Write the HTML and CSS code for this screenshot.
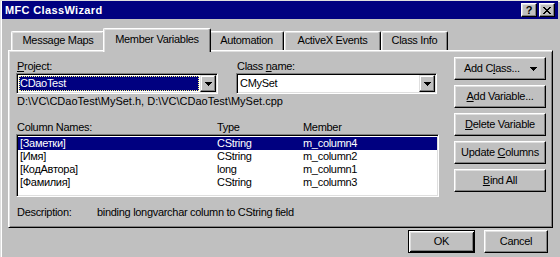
FILE: index.html
```html
<!DOCTYPE html>
<html>
<head>
<meta charset="utf-8">
<title>MFC ClassWizard</title>
<link rel="stylesheet" href="styles.css">
</head>
<body>
<div class="window">
  <div class="titlebar">
    <span class="title">MFC ClassWizard</span>
    <div class="caption-btns">
      <span class="cbtn help">?</span>
      <span class="cbtn close"><svg width="8" height="7" viewBox="0 0 8 7" shape-rendering="crispEdges"><path d="M0 0h2v1h-2zM6 0h2v1h-2zM1 1h2v1h-2zM5 1h2v1h-2zM2 2h4v1h-4zM3 3h2v1h-2zM2 4h4v1h-4zM1 5h2v1h-2zM5 5h2v1h-2zM0 6h2v1h-2zM6 6h2v1h-2z" fill="#000"/></svg></span>
    </div>
  </div>
  <div class="client">
    <div class="tabs">
      <div class="tab t-mm">Message Maps</div>
      <div class="tab t-mv active">Member Variables</div>
      <div class="tab t-au">Automation</div>
      <div class="tab t-ax">ActiveX Events</div>
      <div class="tab t-ci">Class Info</div>
    </div>
    <div class="panel">
      <div class="main">
        <div class="fields">
          <div class="field f-project">
            <span class="label"><u>P</u>roject:</span>
            <div class="combo">
              <span class="combo-text"><span class="sel">CDaoTest</span></span>
              <span class="drop"><svg width="7" height="4" viewBox="0 0 7 4" shape-rendering="crispEdges"><path d="M0 0h7v1h-1v1h-1v1h-1v1h-1v-1h-1v-1h-1v-1h-1z" fill="#000"/></svg></span>
            </div>
          </div>
          <div class="field f-class">
            <span class="label">Class <u>n</u>ame:</span>
            <div class="combo">
              <span class="combo-text"><span class="val">CMySet</span></span>
              <span class="drop"><svg width="7" height="4" viewBox="0 0 7 4" shape-rendering="crispEdges"><path d="M0 0h7v1h-1v1h-1v1h-1v1h-1v-1h-1v-1h-1v-1h-1z" fill="#000"/></svg></span>
            </div>
          </div>
        </div>
        <div class="path">D:\VC\CDaoTest\MySet.h, D:\VC\CDaoTest\MySet.cpp</div>
        <div class="headers">
          <span>Column Names:</span>
          <span>Type</span>
          <span>Member</span>
        </div>
        <div class="listbox">
          <div class="row selected"><span>[Заметки]</span><span>CString</span><span>m_column4</span></div>
          <div class="row"><span>[Имя]</span><span>CString</span><span>m_column2</span></div>
          <div class="row"><span>[КодАвтора]</span><span>long</span><span>m_column1</span></div>
          <div class="row"><span>[Фамилия]</span><span>CString</span><span>m_column3</span></div>
        </div>
        <div class="desc">
          <span class="desc-label">Description:</span>
          <span>binding longvarchar column to CString field</span>
        </div>
      </div>
      <div class="actions">
        <div class="btn btn-split"><span>Add C<u>l</u>ass...</span><svg width="7" height="4" viewBox="0 0 7 4" shape-rendering="crispEdges"><path d="M0 0h7v1h-1v1h-1v1h-1v1h-1v-1h-1v-1h-1v-1h-1z" fill="#000"/></svg></div>
        <div class="btn"><span><u>A</u>dd Variable...</span></div>
        <div class="btn"><span><u>D</u>elete Variable</span></div>
        <div class="btn"><span>Update <u>C</u>olumns</span></div>
        <div class="btn"><span><u>B</u>ind All</span></div>
      </div>
    </div>
    <div class="footer">
      <div class="btn btn-default btn-ok">OK</div>
      <div class="btn btn-cancel">Cancel</div>
    </div>
  </div>
</div>
</body>
</html>
```
FILE: styles.css
```css
* { box-sizing: border-box; }
html, body { margin: 0; padding: 0; }
body {
  width: 560px;
  height: 257px;
  overflow: hidden;
  background: #c0c0c0;
  font-family: "Liberation Sans", Arial, sans-serif;
  font-size: 11px;
  letter-spacing: -0.3px;
  color: #000;
}
u { text-decoration: underline; text-underline-offset: 1px; }

.window {
  height: 257px;
  padding: 1px 2px 0 2px;
  box-shadow: inset 1px 1px #dfdfdf, inset 2px 2px #fff;
}

.titlebar {
  height: 18px;
  background: #000080;
  display: flex;
  align-items: center;
  justify-content: space-between;
  padding: 0 3px 0 3px;
}
.title {
  color: #fff;
  font-weight: bold;
  letter-spacing: 0.35px;
}
.caption-btns { display: flex; gap: 2px; }
.cbtn {
  width: 16px;
  height: 14px;
  background: #c0c0c0;
  border: 1px solid;
  border-color: #fff #000 #000 #fff;
  box-shadow: inset -1px -1px #808080, inset 1px 1px #dfdfdf;
  display: flex;
  align-items: center;
  justify-content: center;
  font-weight: bold;
  font-size: 11px;
  line-height: 1;
  letter-spacing: 0;
}
.cbtn.help { padding-top: 1px; }

.client { padding: 0 5px 0 6px; }

.tabs {
  display: flex;
  align-items: flex-end;
  height: 22px;
  margin: 9px 0 0 3px;
  position: relative;
  z-index: 1;
}
.tab {
  height: 19px;
  background: #c0c0c0;
  border-top: 1px solid #fff;
  border-left: 1px solid #fff;
  border-right: 1px solid #000;
  border-radius: 2px 2px 0 0;
  box-shadow: inset -1px 0 #808080, inset 1px 1px #dfdfdf;
  text-align: center;
  line-height: 17px;
  white-space: nowrap;
}
.tab.active {
  height: 24px;
  margin: 0 -2px -2px -2px;
  padding-top: 2px;
  position: relative;
  z-index: 2;
}
.t-mm { width: 94px; }
.t-mv { width: 108px; }
.t-au { width: 75px; }
.t-ax { width: 97px; }
.t-ci { width: 67px; }

.panel {
  height: 178px;
  border: 1px solid;
  border-color: #fff #000 #000 #fff;
  box-shadow: inset 1px 1px #dfdfdf, inset -1px -1px #808080;
  display: flex;
  gap: 15px;
  padding: 6px 6px 0 7px;
}

.main {
  width: 423px;
  display: flex;
  flex-direction: column;
}
.fields {
  display: flex;
  gap: 18px;
  margin-top: 3px;
}
.field { display: flex; flex-direction: column; }
.f-project { width: 202px; }
.f-class { width: 201px; }
.label {
  line-height: 13px;
  height: 13px;
  padding-left: 1px;
  white-space: nowrap;
}

.combo {
  height: 21px;
  display: flex;
  background: #fff;
  border: 1px solid;
  border-color: #808080 #fff #fff #808080;
  box-shadow: inset 1px 1px #000, inset -1px -1px #dfdfdf;
  padding: 1px;
}
.combo-text {
  flex: 1;
  padding: 1px;
  display: flex;
}
.sel {
  flex: 1;
  height: 15px;
  line-height: 15px;
  background: #000080;
  color: #fff;
  padding-left: 1px;
  outline: 1px dotted #ffff80;
  outline-offset: -1px;
}
.val {
  height: 15px;
  line-height: 15px;
  padding-left: 1px;
}
.drop {
  width: 16px;
  height: 17px;
  background: #c0c0c0;
  border: 1px solid;
  border-color: #dfdfdf #000 #000 #dfdfdf;
  box-shadow: inset -1px -1px #808080, inset 1px 1px #fff;
  display: flex;
  align-items: center;
  justify-content: center;
}

.path {
  margin-top: 1px;
  padding-left: 1px;
  line-height: 13px;
  letter-spacing: 0;
  white-space: nowrap;
}

.headers {
  display: grid;
  grid-template-columns: 200px 86px 1fr;
  padding-left: 1px;
  margin-top: 13px;
  line-height: 13px;
  height: 13px;
}

.listbox {
  height: 63px;
  background: #fff;
  border: 1px solid;
  border-color: #808080 #fff #fff #808080;
  box-shadow: inset 1px 1px #000, inset -1px -1px #dfdfdf;
  padding: 2px 1px 0 1px;
}
.row {
  display: grid;
  grid-template-columns: 197px 86px 1fr;
  height: 13px;
  line-height: 13px;
  padding-left: 2px;
  white-space: nowrap;
}
.row.selected { background: #000080; color: #fff; }

.desc {
  display: flex;
  margin-top: 9px;
  padding-left: 1px;
  line-height: 13px;
  white-space: nowrap;
}
.desc-label { width: 80px; }

.actions {
  width: 92px;
  display: flex;
  flex-direction: column;
  gap: 5px;
}

.btn {
  height: 23px;
  background: #c0c0c0;
  border: 1px solid;
  border-color: #fff #000 #000 #fff;
  box-shadow: inset -1px -1px #808080, inset 1px 1px #dfdfdf;
  display: flex;
  align-items: center;
  justify-content: center;
  white-space: nowrap;
  line-height: 13px;
}
.btn-split {
  justify-content: space-between;
  padding: 0 8px 0 9px;
}

.footer {
  display: flex;
  justify-content: flex-end;
  gap: 9px;
  margin-top: 2px;
  padding-right: 5px;
}
.btn-default {
  border: 1px solid #000;
  box-shadow: inset 1px 1px #fff, inset -1px -1px #000, inset 2px 2px #dfdfdf, inset -2px -2px #808080;
}
.btn-ok { width: 67px; }
.btn-cancel { width: 64px; }
```
